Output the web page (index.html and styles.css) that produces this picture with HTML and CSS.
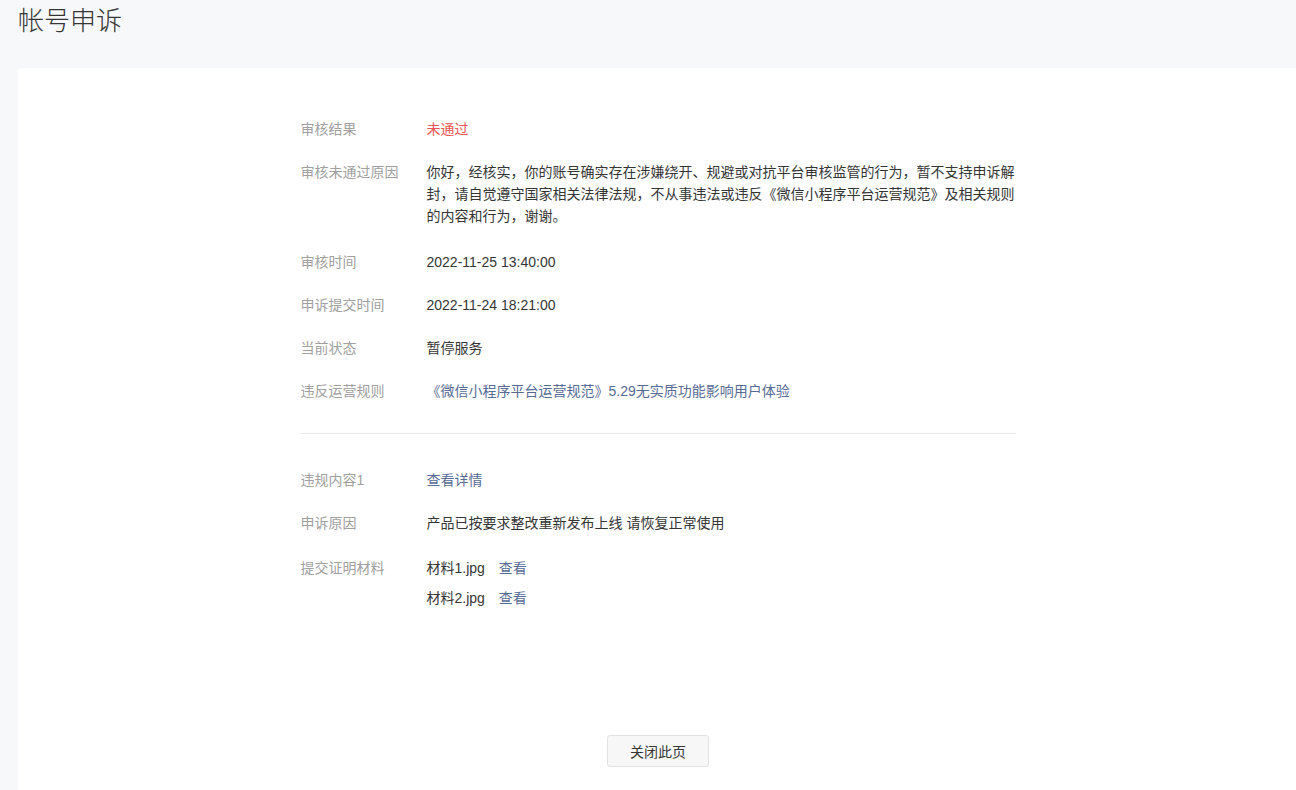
FILE: index.html
```html
<!DOCTYPE html>
<html lang="zh">
<head>
  <meta charset="UTF-8">
  <title>帐号申诉</title>
  <link rel="stylesheet" href="styles.css">
</head>
<body>

  <h1 class="page-title">帐号申诉</h1>

  <div class="card">
    <div class="detail">
      <div class="row">
        <div class="label">审核结果</div>
        <div class="value fail">未通过</div>
      </div>
      <div class="row row-multi">
        <div class="label">审核未通过原因</div>
        <div class="value">你好，经核实，你的账号确实存在涉嫌绕开、规避或对抗平台审核监管的行为，暂不支持申诉解封，请自觉遵守国家相关法律法规，不从事违法或违反《微信小程序平台运营规范》及相关规则的内容和行为，谢谢。</div>
      </div>
      <div class="row">
        <div class="label">审核时间</div>
        <div class="value">2022-11-25 13:40:00</div>
      </div>
      <div class="row">
        <div class="label">申诉提交时间</div>
        <div class="value">2022-11-24 18:21:00</div>
      </div>
      <div class="row">
        <div class="label">当前状态</div>
        <div class="value">暂停服务</div>
      </div>
      <div class="row">
        <div class="label">违反运营规则</div>
        <div class="value"><a class="link" href="#">《微信小程序平台运营规范》5.29无实质功能影响用户体验</a></div>
      </div>

      <div class="divider"></div>

      <div class="row">
        <div class="label">违规内容1</div>
        <div class="value"><a class="link" href="#">查看详情</a></div>
      </div>
      <div class="row">
        <div class="label">申诉原因</div>
        <div class="value">产品已按要求整改重新发布上线 请恢复正常使用</div>
      </div>
      <div class="row row-files">
        <div class="label">提交证明材料</div>
        <div class="value">
          <div class="file">材料1.jpg <a class="link" href="#">查看</a></div>
          <div class="file">材料2.jpg <a class="link" href="#">查看</a></div>
        </div>
      </div>
    </div>

    <div class="actions">
      <button class="btn">关闭此页</button>
    </div>
  </div>

</body>
</html>
```

FILE: styles.css
```css
html, body {
  overflow-x: hidden;
}

body {
  margin: 0;
  background: #f7f8fa;
  font-family: "Liberation Sans", "Noto Sans CJK SC", sans-serif;
  color: #333;
  font-size: 14px;
}

.page-title {
  margin: 0;
  padding: 0 18px;
  height: 44px;
  line-height: 42px;
  font-size: 26px;
  font-weight: 300;
  color: #353535;
}

.card {
  margin: 24px -2px 0 18px;
  padding: 50px 0 40px;
  background: #fff;
  border-radius: 4px;
  min-height: 760px;
  box-sizing: border-box;
}

.detail {
  width: 715px;
  margin: 0 auto;
}

.row {
  display: flex;
  line-height: 22px;
  margin-bottom: 21px;
}

.row-multi {
  margin-bottom: 24px;
}

.row-files {
  margin-top: 23px;
}

.label {
  width: 126px;
  flex-shrink: 0;
  color: #a0a0a0;
}

.value {
  flex: 1;
  color: #353535;
}

.fail {
  color: #ea5455;
}

.link {
  color: #576b95;
  text-decoration: none;
}

.divider {
  height: 1px;
  background: #e7e7e7;
  margin: 31px 0 35px;
}

.file {
  margin-bottom: 8px;
}

.file .link {
  margin-left: 10px;
}

.actions {
  text-align: center;
  margin-top: 118px;
}

.btn {
  width: 102px;
  height: 32px;
  background: #f7f7f7;
  border: 1px solid #e2e2e2;
  border-radius: 3px;
  font-family: "Liberation Sans", "Noto Sans CJK SC", sans-serif;
  font-size: 14px;
  color: #353535;
  cursor: pointer;
}
```
